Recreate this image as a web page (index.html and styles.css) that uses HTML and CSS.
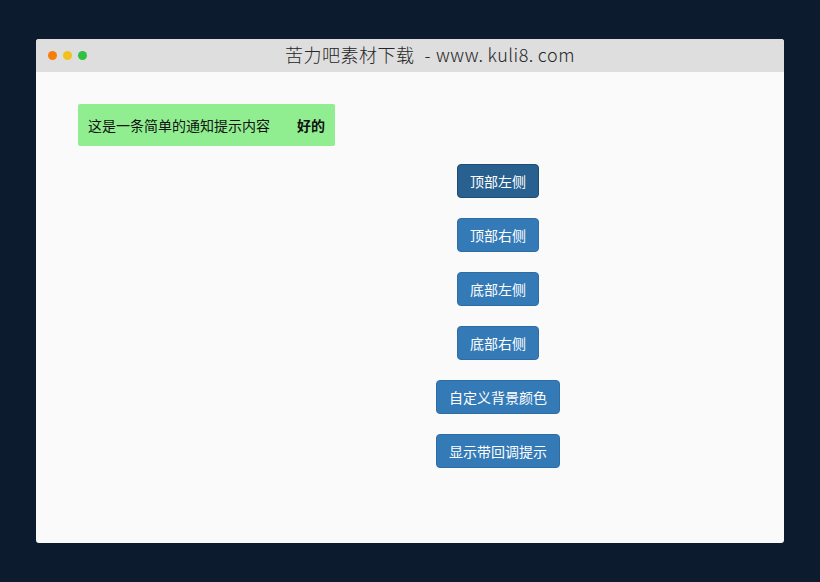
FILE: index.html
```html
<!DOCTYPE html>
<html lang="zh">
<head>
<meta charset="utf-8">
<title>苦力吧素材下载</title>
<link rel="stylesheet" href="styles.css">
</head>
<body>
<div class="window">
  <div class="titlebar">
    <div class="dots">
      <span class="dot orange"></span>
      <span class="dot yellow"></span>
      <span class="dot green"></span>
    </div>
    <div class="title">苦力吧素材下载<span class="dash">-</span>www<span class="dotc">.</span>kuli8<span class="dotc">.</span>com</div>
  </div>
  <div class="content">
    <div class="toast">
      <span class="toast-text">这是一条简单的通知提示内容</span>
      <span class="toast-ok">好的</span>
    </div>
    <div class="buttons">
      <button class="btn active">顶部左侧</button>
      <button class="btn">顶部右侧</button>
      <button class="btn">底部左侧</button>
      <button class="btn">底部右侧</button>
      <button class="btn">自定义背景颜色</button>
      <button class="btn">显示带回调提示</button>
    </div>
  </div>
</div>
</body>
</html>
```
FILE: styles.css
```css
html, body {
  margin: 0;
  padding: 0;
}
body {
  background: #0d1b2e;
  width: 820px;
  height: 582px;
  overflow: hidden;
  font-family: "Microsoft YaHei", "Noto Sans CJK SC", sans-serif;
}
.window {
  position: relative;
  margin: 39px 0 0 36px;
  width: 748px;
  height: 504px;
  background: #fafafa;
  border-radius: 3px;
  overflow: hidden;
}
.titlebar {
  height: 33px;
  background: #dedede;
  display: flex;
  align-items: center;
  position: relative;
}
.dots {
  display: flex;
  gap: 6px;
  padding-left: 12px;
  position: relative;
  z-index: 1;
}
.dot {
  width: 9px;
  height: 9px;
  border-radius: 50%;
  display: block;
}
.orange { background: #f97d0a; }
.yellow { background: #efc21e; }
.green { background: #2ec23f; }
.title {
  position: absolute;
  left: 0;
  right: 0;
  top: 0;
  line-height: 31px;
  text-align: center;
  font-family: "Noto Sans CJK SC", sans-serif;
  font-weight: 300;
  font-size: 18px;
  letter-spacing: 0.5px;
  color: #262626;
  padding-left: 40px;
  white-space: nowrap;
}
.dash {
  margin: 0 5px 0 10px;
}
.dotc {
  margin-right: 4px;
}
.content {
  position: relative;
  height: 471px;
}
.toast {
  position: absolute;
  left: 42px;
  top: 32px;
  width: 257px;
  height: 42px;
  box-sizing: border-box;
  background: #90ee90;
  border-radius: 2px;
  display: flex;
  align-items: center;
  justify-content: space-between;
  padding: 0 10px;
  font-size: 14px;
  color: #111;
}
.toast-ok {
  font-weight: bold;
}
.buttons {
  display: flex;
  flex-direction: column;
  align-items: center;
  gap: 20px;
  padding: 92px 0 0 176px;
}
.btn {
  font-family: "Microsoft YaHei", "Noto Sans CJK SC", sans-serif;
  font-size: 14px;
  line-height: 20px;
  padding: 6px 12px;
  height: 34px;
  color: #fff;
  background: #337ab7;
  border: 1px solid #2e6da4;
  border-radius: 4px;
  cursor: pointer;
}
.btn.active {
  background: #286090;
  border-color: #204d74;
}
```
